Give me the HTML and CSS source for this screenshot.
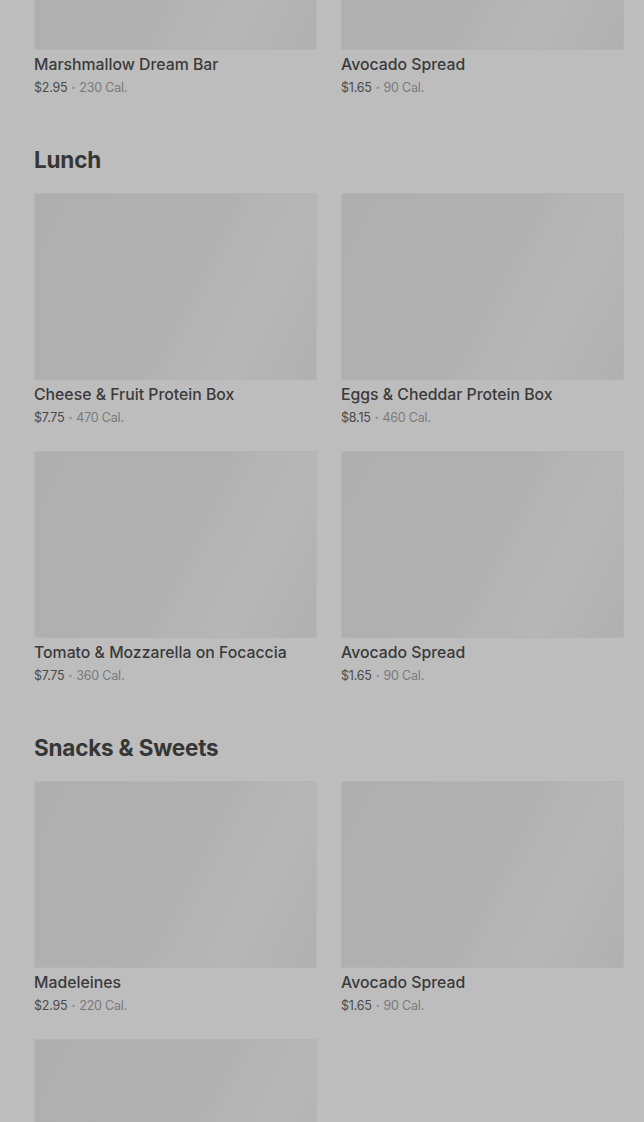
FILE: index.html
```html
<!DOCTYPE html>
<html lang="en">
<head>
<meta charset="utf-8">
<title>Menu</title>
<link rel="stylesheet" href="styles.css">
</head>
<body>
<main class="menu">
  <section class="section section--first">
    <div class="grid">
      <article class="item">
        <div class="thumb"></div>
        <h3 class="name">Marshmallow Dream Bar</h3>
        <p class="meta"><span class="price">$2.95</span><span class="dot">•</span><span class="cal">230 Cal.</span></p>
      </article>
      <article class="item">
        <div class="thumb"></div>
        <h3 class="name">Avocado Spread</h3>
        <p class="meta"><span class="price">$1.65</span><span class="dot">•</span><span class="cal">90 Cal.</span></p>
      </article>
    </div>
  </section>

  <section class="section">
    <h2 class="heading">Lunch</h2>
    <div class="grid">
      <article class="item">
        <div class="thumb"></div>
        <h3 class="name">Cheese &amp; Fruit Protein Box</h3>
        <p class="meta"><span class="price">$7.75</span><span class="dot">•</span><span class="cal">470 Cal.</span></p>
      </article>
      <article class="item">
        <div class="thumb"></div>
        <h3 class="name">Eggs &amp; Cheddar Protein Box</h3>
        <p class="meta"><span class="price">$8.15</span><span class="dot">•</span><span class="cal">460 Cal.</span></p>
      </article>
      <article class="item">
        <div class="thumb"></div>
        <h3 class="name">Tomato &amp; Mozzarella on Focaccia</h3>
        <p class="meta"><span class="price">$7.75</span><span class="dot">•</span><span class="cal">360 Cal.</span></p>
      </article>
      <article class="item">
        <div class="thumb"></div>
        <h3 class="name">Avocado Spread</h3>
        <p class="meta"><span class="price">$1.65</span><span class="dot">•</span><span class="cal">90 Cal.</span></p>
      </article>
    </div>
  </section>

  <section class="section">
    <h2 class="heading">Snacks &amp; Sweets</h2>
    <div class="grid">
      <article class="item">
        <div class="thumb"></div>
        <h3 class="name">Madeleines</h3>
        <p class="meta"><span class="price">$2.95</span><span class="dot">•</span><span class="cal">220 Cal.</span></p>
      </article>
      <article class="item">
        <div class="thumb"></div>
        <h3 class="name">Avocado Spread</h3>
        <p class="meta"><span class="price">$1.65</span><span class="dot">•</span><span class="cal">90 Cal.</span></p>
      </article>
      <article class="item">
        <div class="thumb"></div>
      </article>
    </div>
  </section>
</main>
</body>
</html>
```

FILE: styles.css
```css
html, body {
  margin: 0;
  padding: 0;
  background: #bdbdbd;
}

body {
  font-family: "Inter", "Liberation Sans", sans-serif;
  color: #3a3a3a;
}

.menu {
  padding: 0 20px 0 34px;
  margin-top: -137px;
}

.section {
  margin-top: 48px;
}

.section--first {
  margin-top: 0;
}

.heading {
  margin: 0 0 19px;
  font-size: 22.5px;
  line-height: 28px;
  font-weight: 700;
  color: #363636;
  letter-spacing: -0.2px;
}

.grid {
  display: grid;
  grid-template-columns: 1fr 1fr;
  column-gap: 24px;
  row-gap: 23px;
}

.item {
  margin: 0;
}

.thumb {
  height: 187px;
  box-sizing: border-box;
  border: 1px solid #b4b4b4;
  border-radius: 2px;
  background: linear-gradient(117deg, #afafaf 0%, #b0b0b0 52%, #b5b5b5 62%, #b6b6b6 78%, #b2b2b2 92%, #b0b0b0 100%);
}

.name {
  margin: 5px 0 0;
  font-size: 15.8px;
  line-height: 20px;
  font-weight: 500;
  color: #3a3a3a;
}

.meta {
  margin: 3px 0 0;
  font-size: 12.5px;
  line-height: 20px;
  letter-spacing: -0.2px;
  display: flex;
  align-items: center;
}

.price {
  color: #4a4a4a;
}

.dot {
  color: #8a8a8a;
  font-size: 7px;
  margin: 0 4px 0 4px;
}

.cal {
  color: #7a7a7a;
}
```
